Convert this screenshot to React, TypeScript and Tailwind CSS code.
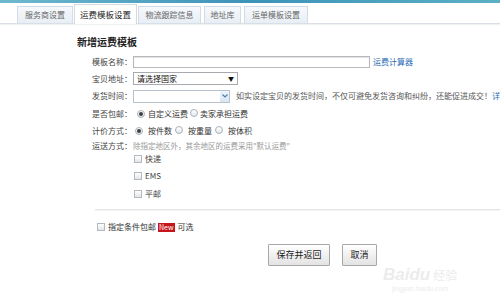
const tabs = ['服务商设置', '运费模板设置', '物流跟踪信息', '地址库', '运单模板设置']

function Radio({ checked = false }: { checked?: boolean }) {
  return (
    <span className="inline-flex h-[8px] w-[8px] items-center justify-center rounded-full border border-[#a9b1b9] bg-gradient-to-b from-white to-[#e4e8ec]">
      {checked && <span className="h-[4px] w-[4px] rounded-full bg-[#3a3f44]" />}
    </span>
  )
}

function Checkbox() {
  return <span className="inline-block h-[8px] w-[8px] border border-[#b3b9bf] bg-gradient-to-b from-white to-[#e2e5e8]" />
}

function Row({ label, className = 'h-[17px]', children }: { label: string; className?: string; children?: React.ReactNode }) {
  return (
    <div className={`flex items-center ${className}`}>
      <div className="w-[56px] shrink-0 text-right text-[#444]">{label}：</div>
      <div className="flex items-center">{children}</div>
    </div>
  )
}

export default function App() {
  return (
    <div
      className="relative h-[308px] w-[500px] overflow-hidden bg-white text-[8px] leading-none text-[#333]"
      style={{ fontFamily: '"Noto Sans CJK SC", "Noto Sans", sans-serif' }}
    >
      <div className="h-[3px] bg-gradient-to-r from-[#6fb9cf] via-[#3d93b8] to-[#5bb0c6]" />

      {/* tabs */}
      <div className="flex h-[21px] items-end gap-[1px] border-b border-[#d9dfe5] pl-[17px] shadow-[0_1px_1px_#eef1f4]">
        {tabs.map((t, i) =>
          i === 1 ? (
            <div key={t} className="-mb-[1px] flex h-[20px] w-[63px] items-center justify-center border border-b-0 border-[#d3dae2] bg-white text-[8.5px] text-[#222]">
              {t}
            </div>
          ) : (
            <div
              key={t}
              className={`flex h-[17px] items-center justify-center border border-b-0 border-[#d3dbe4] bg-gradient-to-b from-[#f6f9fc] to-[#e8eef5] text-[#666] ${
                i === 0 ? 'w-[56px]' : i === 2 ? 'w-[63px]' : i === 3 ? 'ml-[2px] w-[37px]' : 'ml-[2px] w-[64px]'
              }`}
            >
              {t}
            </div>
          ),
        )}
      </div>

      {/* form */}
      <div className="pl-[76px] pt-[13px]">
        <div className="h-[15px] pl-[1px] text-[10px] font-bold text-[#222]">新增运费模板</div>

        <div className="mt-[1px] flex flex-col">
          <Row label="模板名称">
            <input className="ml-[1px] h-[12px] w-[237px] border border-[#b5b9bd] bg-white shadow-[inset_0_1px_1px_#e2e2e2] outline-none" />
            <span className="ml-[3px] text-[#2a6bb5]">运费计算器</span>
          </Row>

          <Row label="宝贝地址">
            <div className="ml-[1px] flex h-[13px] w-[105px] items-center justify-between border border-[#a7abb0] bg-white px-[3px] text-[#111]">
              <span>请选择国家</span>
              <span className="text-[6px]">▼</span>
            </div>
          </Row>

          <Row label="发货时间" className="h-[18px]">
            <div className="ml-[1px] flex h-[13px] w-[97px] items-center justify-end border border-[#b8c2cc] bg-white">
              <span className="flex h-full w-[9px] items-center justify-center bg-gradient-to-b from-[#eef4fb] to-[#d9e6f3]">
                <svg width="6" height="4" viewBox="0 0 6 4">
                  <path d="M0.5 0.5 L3 3 L5.5 0.5" fill="none" stroke="#4d7fb5" strokeWidth="1.2" />
                </svg>
              </span>
            </div>
            <span className="ml-[6px] whitespace-nowrap text-[#555]">
              如实设定宝贝的发货时间，不仅可避免发货咨询和纠纷，还能促进成交！<span className="text-[#2a6bb5]">详情</span>
            </span>
          </Row>

          <Row label="是否包邮">
            <span className="ml-[5px]"><Radio checked /></span>
            <span className="ml-[3px]">自定义运费</span>
            <span className="ml-[2px]"><Radio /></span>
            <span className="ml-[2px]">卖家承担运费</span>
          </Row>

          <Row label="计价方式">
            <span className="ml-[3px]"><Radio checked /></span>
            <span className="ml-[5px]">按件数</span>
            <span className="ml-[3px]"><Radio /></span>
            <span className="ml-[5px]">按重量</span>
            <span className="ml-[3px]"><Radio /></span>
            <span className="ml-[5px]">按体积</span>
          </Row>

          <Row label="运送方式" className="h-[13px]">
            <span className="ml-[1px] text-[7.5px] text-[#999]">除指定地区外，其余地区的运费采用"默认运费"</span>
          </Row>

          <div className="-mt-[2px] flex flex-col pl-[58px]">
            {['快递', 'EMS', '平邮'].map((c) => (
              <div key={c} className="flex h-[17.5px] items-center gap-[3px]">
                <Checkbox />
                <span className="text-[#444]">{c}</span>
              </div>
            ))}
          </div>
        </div>
      </div>

      <div className="ml-[95px] mt-[6px] border-t border-[#e3e3e3] shadow-[0_1px_1px_#f3f3f3]" />

      <div className="mt-[13px] flex items-center pl-[97px]">
        <Checkbox />
        <span className="ml-[3px] text-[#333]">指定条件包邮</span>
        <span className="ml-[2px] bg-[#c4161c] px-[1px] py-[1px] text-[7px] text-white">New</span>
        <span className="ml-[3px]">可选</span>
      </div>

      <div className="mt-[12px] flex gap-[12px] pl-[268px]">
        <button className="h-[22px] w-[62px] rounded-[1px] border border-[#a8a8a8] bg-gradient-to-b from-white to-[#e3e3e3] text-[9px] text-[#222]">
          保存并返回
        </button>
        <button className="h-[22px] w-[35px] rounded-[1px] border border-[#a8a8a8] bg-gradient-to-b from-white to-[#e3e3e3] text-[9px] text-[#222]">
          取消
        </button>
      </div>

      {/* watermark */}
      <div className="absolute left-[383px] top-[266px] flex flex-col items-center text-[#ececec]">
        <div className="flex items-center gap-[3px]">
          <span className="text-[17px] font-bold italic" style={{ fontFamily: '"Liberation Sans", sans-serif' }}>Baidu</span>
          <span className="text-[12px]">经验</span>
        </div>
        <span className="mt-[2px] text-[7px]" style={{ fontFamily: '"Liberation Sans", sans-serif' }}>jingyan.baidu.com</span>
      </div>
    </div>
  )
}
